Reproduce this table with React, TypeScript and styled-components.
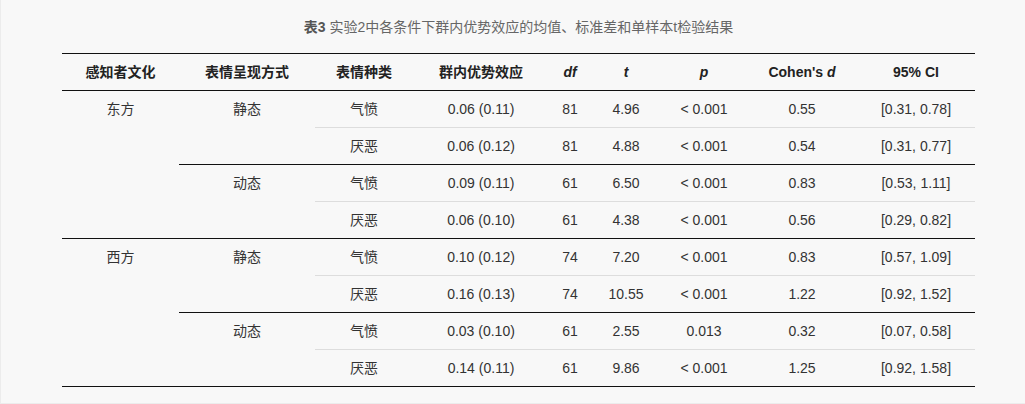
import React from 'react'
import styled, { createGlobalStyle } from 'styled-components'

const GlobalStyle = createGlobalStyle`
   html, body {
      margin: 0;
      padding: 0;
      background: #f8f8f8;
   }
`

const Page = styled.div`
   box-sizing: border-box;
   width: 1025px;
   height: 404px;
   padding: 17px 51px 0 61px;
   background: #f8f8f8;
   border-left: 1px solid #ececec;
   border-bottom: 1px solid #ececec;
   font-family: 'Liberation Sans', 'Noto Sans CJK SC', Arial, sans-serif;
   color: #333;
`

const Table = styled.table`
   width: 913px;
   border-collapse: collapse;
   table-layout: fixed;
   font-size: 14px;
   border-bottom: 1px solid #111;
`

const Caption = styled.caption`
   line-height: 20px;
   padding-bottom: 16px;
   font-size: 14px;
   color: #666;
   & b {
      color: #555;
      font-weight: 700;
   }
`

const Th = styled.th`
   height: 36px;
   padding: 0;
   line-height: 36px;
   font-weight: 700;
   color: #222;
   text-align: center;
   border-top: 1px solid #111;
   border-bottom: 1px solid #111;
   & i {
      font-style: italic;
   }
`

type Line = 'none' | 'light' | 'dark'

const Td = styled.td<{ $line: Line; $span?: boolean }>`
   height: 36px;
   padding: 0;
   line-height: 36px;
   text-align: center;
   vertical-align: ${({ $span }) => ($span ? 'top' : 'middle')};
   white-space: nowrap;
   border-top: ${({ $line }) =>
      $line === 'dark' ? '1px solid #111' : $line === 'light' ? '1px solid #ddd' : 'none'};
`

const widths = [117, 136, 98, 136, 42, 70, 86, 110, 118]

type Row = { emo: string; m: string; df: string; t: string; p: string; d: string; ci: string }

const data: { culture: string; modes: { mode: string; rows: Row[] }[] }[] = [
   {
      culture: '东方',
      modes: [
         {
            mode: '静态',
            rows: [
               { emo: '气愤', m: '0.06 (0.11)', df: '81', t: '4.96', p: '< 0.001', d: '0.55', ci: '[0.31, 0.78]' },
               { emo: '厌恶', m: '0.06 (0.12)', df: '81', t: '4.88', p: '< 0.001', d: '0.54', ci: '[0.31, 0.77]' },
            ],
         },
         {
            mode: '动态',
            rows: [
               { emo: '气愤', m: '0.09 (0.11)', df: '61', t: '6.50', p: '< 0.001', d: '0.83', ci: '[0.53, 1.11]' },
               { emo: '厌恶', m: '0.06 (0.10)', df: '61', t: '4.38', p: '< 0.001', d: '0.56', ci: '[0.29, 0.82]' },
            ],
         },
      ],
   },
   {
      culture: '西方',
      modes: [
         {
            mode: '静态',
            rows: [
               { emo: '气愤', m: '0.10 (0.12)', df: '74', t: '7.20', p: '< 0.001', d: '0.83', ci: '[0.57, 1.09]' },
               { emo: '厌恶', m: '0.16 (0.13)', df: '74', t: '10.55', p: '< 0.001', d: '1.22', ci: '[0.92, 1.52]' },
            ],
         },
         {
            mode: '动态',
            rows: [
               { emo: '气愤', m: '0.03 (0.10)', df: '61', t: '2.55', p: '0.013', d: '0.32', ci: '[0.07, 0.58]' },
               { emo: '厌恶', m: '0.14 (0.11)', df: '61', t: '9.86', p: '< 0.001', d: '1.25', ci: '[0.92, 1.58]' },
            ],
         },
      ],
   },
]

export default function App() {
   const body: React.ReactNode[] = []
   data.forEach((group, gi) => {
      const groupRows = group.modes.reduce((n, m) => n + m.rows.length, 0)
      group.modes.forEach((mode, mi) => {
         mode.rows.forEach((r, ri) => {
            const first = mi === 0 && ri === 0
            const modeLine: Line = first && gi === 0 ? 'none' : 'dark'
            const cellLine: Line = ri === 0 ? modeLine : 'light'
            body.push(
               <tr key={`${gi}-${mi}-${ri}`}>
                  {first && (
                     <Td $line={gi === 0 ? 'none' : 'dark'} $span rowSpan={groupRows}>
                        {group.culture}
                     </Td>
                  )}
                  {ri === 0 && (
                     <Td $line={modeLine} $span rowSpan={mode.rows.length}>
                        {mode.mode}
                     </Td>
                  )}
                  <Td $line={cellLine}>{r.emo}</Td>
                  <Td $line={cellLine}>{r.m}</Td>
                  <Td $line={cellLine}>{r.df}</Td>
                  <Td $line={cellLine}>{r.t}</Td>
                  <Td $line={cellLine}>{r.p}</Td>
                  <Td $line={cellLine}>{r.d}</Td>
                  <Td $line={cellLine}>{r.ci}</Td>
               </tr>
            )
         })
      })
   })

   return (
      <>
         <GlobalStyle />
         <Page>
            <Table>
               <Caption>
                  <b>表3</b> 实验2中各条件下群内优势效应的均值、标准差和单样本t检验结果
               </Caption>
               <colgroup>
                  {widths.map((w, i) => (
                     <col key={i} style={{ width: w }} />
                  ))}
               </colgroup>
               <thead>
                  <tr>
                     <Th>感知者文化</Th>
                     <Th>表情呈现方式</Th>
                     <Th>表情种类</Th>
                     <Th>群内优势效应</Th>
                     <Th>
                        <i>df</i>
                     </Th>
                     <Th>
                        <i>t</i>
                     </Th>
                     <Th>
                        <i>p</i>
                     </Th>
                     <Th>
                        Cohen's <i>d</i>
                     </Th>
                     <Th>95% CI</Th>
                  </tr>
               </thead>
               <tbody>{body}</tbody>
            </Table>
         </Page>
      </>
   )
}
